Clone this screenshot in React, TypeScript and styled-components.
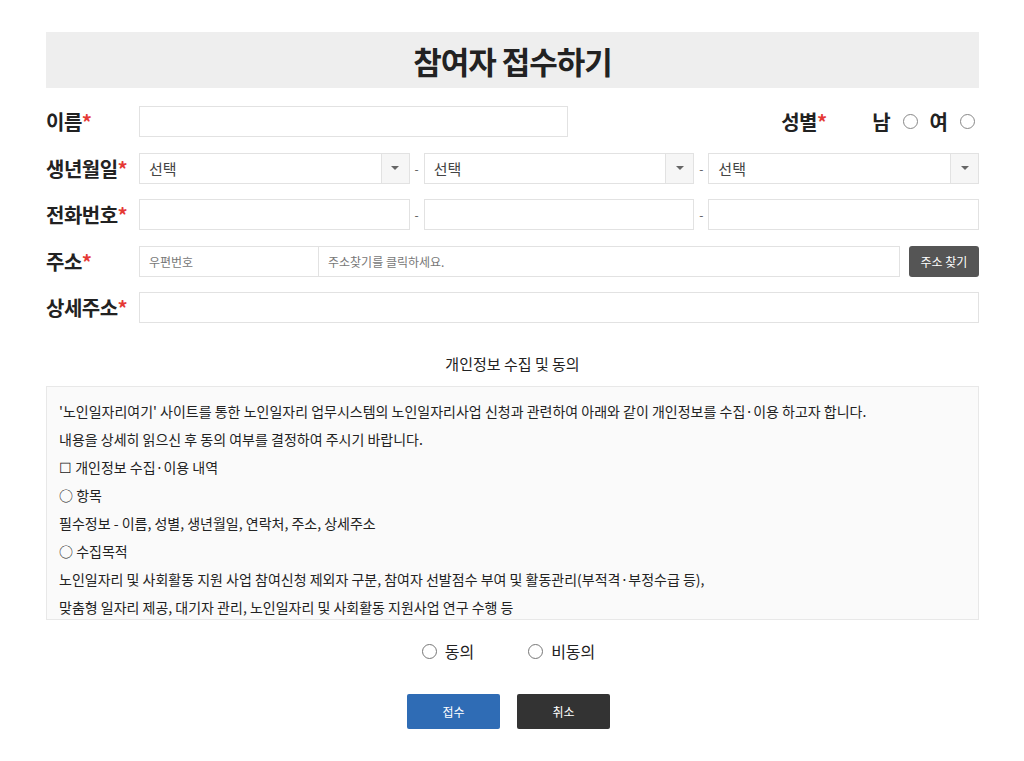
import styled, { createGlobalStyle } from 'styled-components';

const Global = createGlobalStyle`
  body { margin: 0; background: #fff; font-family: "Noto Sans CJK KR", "Noto Sans", sans-serif; color: #222; }
  * { box-sizing: border-box; }
`;

const Page = styled.div`
  width: 933px;
  margin: 32px auto 0 46px;
`;

const Title = styled.h1`
  margin: 0 0 18px;
  height: 56px;
  background: #eee;
  display: flex;
  align-items: center;
  justify-content: center;
  font-size: 31px;
  font-weight: 700;
  letter-spacing: -1px;
`;

const Row = styled.div`
  display: flex;
  align-items: center;
  height: 31px;
  margin-bottom: 15.5px;
`;

const Label = styled.div<{ $w?: number }>`
  width: ${({ $w }) => $w ?? 93}px;
  flex-shrink: 0;
  font-size: 20px;
  font-weight: 700;
  letter-spacing: -0.5px;
  span { color: #e53935; }
`;

const Input = styled.input<{ $w?: number }>`
  height: 31px;
  border: 1px solid #e2e2e2;
  padding: 0 9px;
  font-family: inherit;
  font-size: 12px;
  color: #555;
  ${({ $w }) => ($w ? `width: ${$w}px; flex-shrink: 0;` : 'flex: 1; min-width: 0;')}
  &::placeholder { color: #777; }
`;

const Dash = styled.div`
  width: 14px;
  text-align: center;
  font-size: 12px;
  color: #555;
`;

const Select = styled.div`
  flex: 1;
  height: 31px;
  border: 1px solid #e2e2e2;
  display: flex;
  align-items: center;
  font-size: 15px;
  color: #444;
`;

const SelectText = styled.div`
  flex: 1;
  padding-left: 9px;
`;

const Arrow = styled.div`
  width: 28px;
  height: 100%;
  border-left: 1px solid #e2e2e2;
  background: #f6f6f6;
  display: flex;
  align-items: center;
  justify-content: center;
  &::after {
    content: '';
    border: 4px solid transparent;
    border-top: 4px solid #666;
    border-bottom: 0;
  }
`;

const Gender = styled.div`
  margin-left: auto;
  display: flex;
  align-items: center;
  font-size: 20px;
  font-weight: 700;
`;

const Radio = styled.span<{ $gap?: number }>`
  display: inline-block;
  width: 15px;
  height: 15px;
  border: 1px solid #888;
  border-radius: 50%;
  margin: 0 ${({ $gap }) => $gap ?? 12}px 0 12px;
`;

const FindButton = styled.button`
  margin-left: 9px;
  width: 70px;
  height: 31px;
  border: none;
  border-radius: 3px;
  background: #555;
  color: #fff;
  font-family: inherit;
  font-size: 12px;
`;

const ConsentTitle = styled.div`
  text-align: center;
  font-size: 15px;
  margin: 30px 0 12px;
`;

const ConsentBox = styled.div`
  height: 234px;
  overflow: hidden;
  background: #fafafa;
  border: 1px solid #e8e8e8;
  padding: 10px 12px;
  font-size: 14px;
  line-height: 28px;
  color: #222;
  p { margin: 0; white-space: nowrap; }
`;

const Agree = styled.div`
  display: flex;
  justify-content: center;
  gap: 54px;
  margin: 19px 8px 0 0;
  font-size: 16px;
  label { display: flex; align-items: center; gap: 8px; }
`;

const AgreeRadio = styled.span`
  width: 15px;
  height: 15px;
  border: 1px solid #777;
  border-radius: 50%;
`;

const Buttons = styled.div`
  display: flex;
  justify-content: center;
  gap: 17px;
  margin: 31px 8px 0 0;
`;

const Btn = styled.button<{ $dark?: boolean }>`
  width: 93px;
  height: 35px;
  border: none;
  border-radius: 2px;
  background: ${({ $dark }) => ($dark ? '#333' : '#2f6cb5')};
  color: #fff;
  font-family: inherit;
  font-size: 12px;
`;

const SelectBox = () => (
  <Select>
    <SelectText>선택</SelectText>
    <Arrow />
  </Select>
);

export default function App() {
  return (
    <>
      <Global />
      <Page>
        <Title>참여자 접수하기</Title>
        <Row>
          <Label>이름<span>*</span></Label>
          <Input $w={429} />
          <Gender>
            <Label $w={91}>성별<span>*</span></Label>
            남<Radio />여<Radio $gap={4} />
          </Gender>
        </Row>
        <Row>
          <Label>생년월일<span>*</span></Label>
          <SelectBox /><Dash>-</Dash><SelectBox /><Dash>-</Dash><SelectBox />
        </Row>
        <Row>
          <Label>전화번호<span>*</span></Label>
          <Input /><Dash>-</Dash><Input /><Dash>-</Dash><Input />
        </Row>
        <Row>
          <Label>주소<span>*</span></Label>
          <Input $w={180} placeholder="우편번호" />
          <Input placeholder="주소찾기를 클릭하세요." style={{ borderLeft: 'none' }} />
          <FindButton>주소 찾기</FindButton>
        </Row>
        <Row>
          <Label>상세주소<span>*</span></Label>
          <Input />
        </Row>
        <ConsentTitle>개인정보 수집 및 동의</ConsentTitle>
        <ConsentBox>
          <p>'노인일자리여기' 사이트를 통한 노인일자리 업무시스템의 노인일자리사업 신청과 관련하여 아래와 같이 개인정보를 수집·이용 하고자 합니다.</p>
          <p>내용을 상세히 읽으신 후 동의 여부를 결정하여 주시기 바랍니다.</p>
          <p>☐ 개인정보 수집·이용 내역</p>
          <p>○ 항목</p>
          <p>필수정보 - 이름, 성별, 생년월일, 연락처, 주소, 상세주소</p>
          <p>○ 수집목적</p>
          <p>노인일자리 및 사회활동 지원 사업 참여신청 제외자 구분, 참여자 선발점수 부여 및 활동관리(부적격·부정수급 등),</p>
          <p>맞춤형 일자리 제공, 대기자 관리, 노인일자리 및 사회활동 지원사업 연구 수행 등</p>
        </ConsentBox>
        <Agree>
          <label><AgreeRadio />동의</label>
          <label><AgreeRadio />비동의</label>
        </Agree>
        <Buttons>
          <Btn>접수</Btn>
          <Btn $dark>취소</Btn>
        </Buttons>
      </Page>
    </>
  );
}
